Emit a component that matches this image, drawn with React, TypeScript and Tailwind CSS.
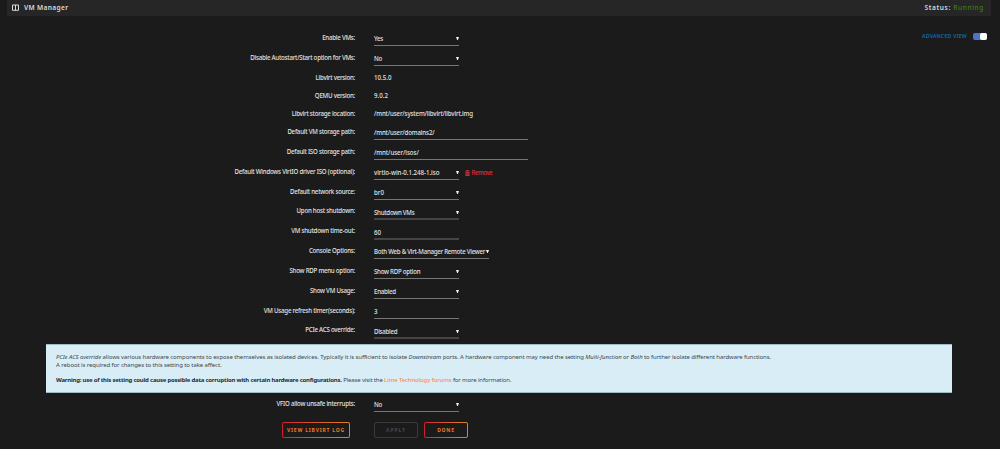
import type { ReactNode } from "react";
import clsx from "clsx";

type Field = {
  label: string;
  value: string;
  kind: "select" | "input" | "text";
  row: string;
  width?: string;
  track?: string;
  heavy?: boolean;
  extra?: ReactNode;
};

const fields: Field[] = [
  { label: "Enable VMs:", value: "Yes", kind: "select", row: "h-[20px]" },
  { label: "Disable Autostart/Start option for VMs:", value: "No", kind: "select", row: "h-[20px]" },
  { label: "Libvirt version:", value: "10.5.0", kind: "text", row: "h-[20px]", track: "tracking-[0.03px]" },
  { label: "QEMU version:", value: "9.0.2", kind: "text", row: "h-[18px]", track: "tracking-[0.03px]" },
  {
    label: "Libvirt storage location:",
    value: "/mnt/user/system/libvirt/libvirt.img",
    kind: "text",
    row: "h-[18px]",
    track: "tracking-[-0.15px]",
  },
  {
    label: "Default VM storage path:",
    value: "/mnt/user/domains2/",
    kind: "input",
    row: "h-[18px]",
    width: "w-[154px]",
    track: "tracking-[-0.15px]",
  },
  {
    label: "Default ISO storage path:",
    value: "/mnt/user/isos/",
    kind: "input",
    row: "h-[20px]",
    width: "w-[154px]",
    track: "tracking-[-0.07px]",
  },
  {
    label: "Default Windows VirtIO driver ISO (optional):",
    value: "virtio-win-0.1.248-1.iso",
    kind: "select",
    row: "h-[20px]",
    track: "tracking-[-0.03px]",
    extra: <RemoveLink />,
  },
  { label: "Default network source:", value: "br0", kind: "select", row: "h-[20px]", track: "tracking-normal" },
  { label: "Upon host shutdown:", value: "Shutdown VMs", kind: "select", row: "h-[20px]", heavy: true },
  { label: "VM shutdown time-out:", value: "60", kind: "input", row: "h-[20px]", track: "tracking-normal", heavy: true },
  {
    label: "Console Options:",
    value: "Both Web & Virt-Manager Remote Viewer",
    kind: "select",
    row: "h-[19px]",
    width: "w-[115px]",
  },
  { label: "Show RDP menu option:", value: "Show RDP option", kind: "select", row: "h-[20px]" },
  { label: "Show VM Usage:", value: "Enabled", kind: "select", row: "h-[20px]" },
  { label: "VM Usage refresh timer(seconds):", value: "3", kind: "input", row: "h-[20px]" },
  { label: "PCIe ACS override:", value: "Disabled", kind: "select", row: "h-[20px]", heavy: true },
];

function RemoveLink() {
  return (
    <a className="ml-[6px] mb-[3px] flex items-center gap-[1.5px] tracking-[-0.45px] text-[#e02b35]">
      <svg viewBox="0 0 10 12" className="w-[5px] h-[6px]">
        <path
          fill="currentColor"
          fillRule="evenodd"
          d="M3 0h4v1.3h3v1.4H0V1.3h3zM1 3.3h8V12H1zM3.2 5v5.2h.7V5zm1.5 0v5.2h.7V5zm1.5 0v5.2h.7V5z"
        />
      </svg>
      Remove
    </a>
  );
}

function FieldRow({ field }: { field: Field }) {
  const { label, value, kind, row, width = "w-[85px]", track = "tracking-[-0.27px]", heavy, extra } = field;

  return (
    <div className={clsx("flex items-end", row)}>
      <div className={clsx("w-[355px] shrink-0 text-right tracking-[-0.24px]", heavy ? "pb-[5px]" : "pb-[4px]")}>
        {label}
      </div>
      {kind === "text" ? (
        <div className={clsx("ml-[19px] pb-[4px]", track)}>{value}</div>
      ) : (
        <div
          className={clsx(
            "ml-[19px] flex h-[12px] shrink-0 items-center justify-between pb-[1px]",
            heavy ? "border-b-2 border-[#454545]" : "border-b border-[#767676]",
            width,
          )}
        >
          <span className={track}>{value}</span>
          {kind === "select" && (
            <svg viewBox="0 0 4 4" className="mr-[0.5px] mb-[1px] size-[3px] shrink-0">
              <path fill="#f2f2f2" d="M0 0h4L2.5 4h-1z" />
            </svg>
          )}
        </div>
      )}
      {extra}
    </div>
  );
}

function GradientButton({ className, children }: { className: string; children: ReactNode }) {
  return (
    <button
      className={clsx(
        "flex h-[16px] rounded-[2px] bg-linear-to-r from-[#cf1f2b] to-[#e0801f] p-[1.2px] text-[5px] font-bold tracking-[0.8px] text-[#ee7a26]",
        className,
      )}
    >
      <span className="flex size-full items-center justify-center rounded-[1px] bg-[#1c1b1b]">{children}</span>
    </button>
  );
}

export default function App() {
  return (
    <div className="h-[449px] w-[1000px] overflow-hidden bg-[#1c1b1b] font-['Noto_Sans',sans-serif] text-[6.15px] leading-[8px] font-medium whitespace-nowrap text-[#e4e4e4]">
      <header className="ml-[7px] flex h-[16px] w-[984px] items-center justify-between bg-[#262626] pr-[7px] pb-[1px] pl-[5px] text-[6.6px] font-semibold text-[#dcdcdc]">
        <div className="flex items-center gap-[5px] tracking-[0.35px]">
          <svg viewBox="0 0 7 7" className="size-[7px]" fill="none" stroke="currentColor">
            <path strokeWidth="1" d="M.5 1h6v5.3h-6zM3.5 1v5.3" />
          </svg>
          VM Manager
        </div>
        <div className="tracking-[0.6px]">
          Status: <span className="font-medium text-[#3f7a18]">Running</span>
        </div>
      </header>

      <main className="flex h-[328px] justify-between pt-[5px]">
        <div className="pt-[5px]">
          {fields.map((field) => (
            <FieldRow key={field.label} field={field} />
          ))}
        </div>
        <div className="mt-[11px] mr-[13.5px] flex h-[8px] items-center gap-[5.5px] text-[5.2px] tracking-[0.25px] text-[#0b79c4]">
          ADVANCED VIEW
          <span className="flex h-[7px] w-[14px] justify-end rounded-[2px] bg-[#4f73c8]">
            <span className="h-[7px] w-[7px] rounded-[2px] bg-white" />
          </span>
        </div>
      </main>

      <blockquote className="ml-[46px] h-[49px] w-[906px] border-y border-[#9dbcc4] bg-[#d9edf6] pt-[8px] pl-[10px] text-[6px] font-normal tracking-[-0.14px] text-[#3c4850]">
        <p className="tracking-[-0.09px]">
          <i>PCIe ACS override</i> allows various hardware components to expose themselves as isolated devices. Typically
          it is sufficient to isolate <i>Downstream</i> ports. A hardware component may need the setting{" "}
          <i>Multi-function</i> or <i>Both</i> to further isolate different hardware functions.
          <br />A reboot is required for changes to this setting to take affect.
        </p>
        <p className="mt-[7px]">
          <b className="tracking-[-0.225px] text-[#262d31]">
            Warning: use of this setting could cause possible data corruption with certain hardware configurations.
          </b>{" "}
          Please visit the <a className="font-medium text-[#ff8c4a]">Lime Technology forums</a> for more information.
        </p>
      </blockquote>

      <FieldRow field={{ label: "VFIO allow unsafe interrupts:", value: "No", kind: "select", row: "h-[19px]" }} />
      <div className="mt-[10px] flex pl-[282px]">
        <GradientButton className="w-[68px]">VIEW LIBVIRT LOG</GradientButton>
        <button className="ml-[24px] h-[16px] w-[44px] rounded-[2px] border border-[#3a3a3a] text-[5px] leading-[13px] font-bold tracking-[0.9px] text-[#484848]">
          APPLY
        </button>
        <GradientButton className="ml-[6px] w-[44px]">DONE</GradientButton>
      </div>
    </div>
  );
}
